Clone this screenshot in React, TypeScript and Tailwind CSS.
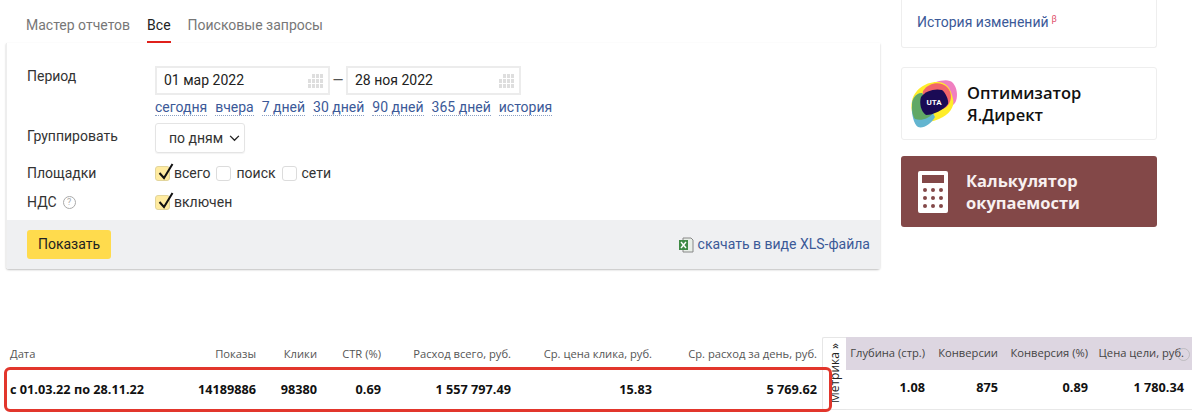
import React from "react";

function Cal() {
  const cells = [0, 1, 2, 3, 4, 5, 6, 7, 8, 9, 10, 11];
  return (
    <div className="grid grid-cols-4 gap-px w-[15px] h-[14px] opacity-60">
      {cells.map((c) => (
        <div key={c} className={c === 0 ? "bg-transparent" : "bg-[#c9c9c9]"} />
      ))}
    </div>
  );
}

function DateInput({ value }: { value: string }) {
  return (
    <div className="w-[175px] h-[29px] border-2 border-[#ececec] bg-white flex items-center justify-between pl-[7px] pr-[5px] text-[14px] text-[#222]">
      <span>{value}</span>
      <Cal />
    </div>
  );
}

function Check({ on }: { on: boolean }) {
  return (
    <span className={`relative block w-[15px] h-[15px] rounded-[3px] border ${on ? "bg-[#ffeba0] border-[#e2d59c]" : "bg-white border-[#dcdcdc]"}`}>
      {on && (
        <svg viewBox="0 0 18 20" className="absolute left-[1px] top-[-5px] w-[18px] h-[20px]">
          <path d="M2.5 11 L7 16 L15.5 2" fill="none" stroke="#111" strokeWidth="2" />
        </svg>
      )}
    </span>
  );
}

function Lnk({ children }: { children: React.ReactNode }) {
  return (
    <span className="text-[#3b5998] border-b border-dotted border-[#8ba0c4] leading-[15px] h-[16px]">{children}</span>
  );
}

function Row({ label, children, className }: { label: React.ReactNode; children: React.ReactNode; className: string }) {
  return (
    <div className={`flex ${className}`}>
      <div className="w-[155px] pl-[27px] shrink-0 text-[#333]">{label}</div>
      {children}
    </div>
  );
}

const cols = [
  ["w-[246px]", "Показы", "14189886"],
  ["w-[61px]", "Клики", "98380"],
  ["w-[64px]", "CTR (%)", "0.69"],
  ["w-[130px]", "Расход всего, руб.", "1 557 797.49"],
  ["w-[141px]", "Ср. цена клика, руб.", "15.83"],
  ["w-[165px]", "Ср. расход за день, руб.", "5 769.62"],
];
const cols2 = [
  ["w-[79px]", "Глубина (стр.)", "1.08"],
  ["w-[73px]", "Конверсии", "875"],
  ["w-[90px]", "Конверсия (%)", "0.89"],
  ["w-[96px]", "Цена цели, руб.", "1 780.34"],
];

export default function App() {
  return (
    <div className="relative w-[1200px] h-[413px] overflow-hidden bg-white text-[14px] font-['Roboto','Open_Sans',sans-serif]">
      <div className="flex h-[270px]">
        <div className="w-[880px] shrink-0">
          <div className="flex h-[43px] pl-[26px] gap-[17px] text-[14px] text-[#777] pt-[15px] leading-[20px]">
            <span>Мастер отчетов</span>
            <span className="relative text-[#222] h-[28px]">
              Все
              <span className="absolute left-0 right-0 bottom-0 h-[2px] bg-[#e0201b]" />
            </span>
            <span>Поисковые запросы</span>
          </div>
          <div className="ml-[6px] w-[874px] h-[226px] rounded-b-[3px] border-l border-[#eeeeee] shadow-[0_1px_2px_rgba(0,0,0,0.25)] flex flex-col">
            <div className="flex-1 -ml-[7px] pt-[23px]">
              <Row label="Период" className="h-[29px]">
                <div className="flex items-center">
                  <DateInput value="01 мар 2022" />
                  <span className="w-[16px] text-center text-[#555] mx-[0px]">—</span>
                  <DateInput value="28 ноя 2022" />
                </div>
              </Row>
              <div className="flex gap-[8px] pl-[155px] mt-[5px] h-[18px]">
                <Lnk>сегодня</Lnk>
                <Lnk>вчера</Lnk>
                <Lnk>7 дней</Lnk>
                <Lnk>30 дней</Lnk>
                <Lnk>90 дней</Lnk>
                <Lnk>365 дней</Lnk>
                <Lnk>история</Lnk>
              </div>
              <Row label={<span className="relative top-[3px]">Группировать</span>} className="h-[30px] mt-[5px]">
                <div className="relative w-[90px] h-[30px] border border-[#e4e4e4] rounded-[3px] pl-[13px] flex items-center gap-[6px] text-[#333] shadow-[0_1px_1px_rgba(0,0,0,0.05)]">
                  по дням
                  <svg viewBox="0 0 12 8" className="w-[11px] h-[7px]">
                    <path d="M1 1 L6 6 L11 1" fill="none" stroke="#222" strokeWidth="1.5" />
                  </svg>
                </div>
              </Row>
              <Row label="Площадки" className="h-[20px] mt-[10px] items-center">
                <div className="flex items-center text-[#333]">
                  <Check on />
                  <span className="ml-[4px]">всего</span>
                  <span className="ml-[6px]"><Check on={false} /></span>
                  <span className="ml-[5px]">поиск</span>
                  <span className="ml-[6px]"><Check on={false} /></span>
                  <span className="ml-[5px]">сети</span>
                </div>
              </Row>
              <Row
                label={
                  <span className="flex items-center gap-[6px]">
                    НДС
                    <span className="w-[13px] h-[13px] rounded-full border border-[#aaa] text-[#aaa] text-[9px] leading-[11px] text-center">?</span>
                  </span>
                }
                className="h-[20px] mt-[9px] items-center"
              >
                <div className="flex items-center text-[#333]">
                  <Check on />
                  <span className="ml-[4px]">включен</span>
                </div>
              </Row>
            </div>
            <div className="h-[49px] bg-[#eff0f2] flex items-center justify-between pl-[20px] pr-[10px]">
              <div className="w-[84px] h-[29px] bg-[#ffdb4d] rounded-[3px] flex items-center justify-center text-[#222]">Показать</div>
              <div className="flex items-center gap-[4px] text-[#3b5998]">
                <svg viewBox="0 0 16 16" className="w-[16px] h-[16px]">
                  <path d="M5 1h8l2 2v12H5z" fill="#e8eee8" stroke="#888" strokeWidth="1" />
                  <rect x="1" y="3" width="9" height="10" fill="#3f8a45" />
                  <path d="M3 5 L8 11 M8 5 L3 11" stroke="#fff" strokeWidth="1.4" />
                </svg>
                скачать в виде XLS-файла
              </div>
            </div>
          </div>
        </div>
        <div className="ml-[21px] w-[256px] shrink-0 flex flex-col">
          <div className="h-[48px] border border-t-0 border-[#eeeeee] rounded-b-[3px] pl-[15px] pt-[13px] leading-[18px] text-[#3b5998]">
            История изменений<sup className="text-[#e0506a] text-[9px] ml-[3px] -top-[5px]">β</sup>
          </div>
          <div className="mt-[19px] h-[73px] border border-[#eeeeee] rounded-[3px] flex items-center pl-[7px]">
            <svg viewBox="0 0 50 50" className="w-[50px] h-[50px] shrink-0">
              <path d="M27 3 C33 1 41 0 44 4 C48 9 49 16 47 22 C45 28 36 30 30 30 Z" fill="#f07fc0" />
              <path d="M3 22 C5 12 15 3 28 3 C38 3 42 10 44 20 C46 28 40 36 30 40 C22 44 8 44 4 36 C2 31 2 26 3 22 Z" fill="#ffed29" />
              <path d="M14 12 C20 3 32 2 38 8 C44 14 43 24 36 29 C28 33 16 30 12 24 Z" fill="#f2656a" />
              <path d="M3 26 C3 20 7 14 13 14 L26 38 C22 45 14 50 9 48 C5 46 2 34 3 26 Z" fill="#63b5d0" />
              <path d="M3 26 C3 20 7 14 13 14 L24 34 C20 40 12 42 6 40 C3 36 3 30 3 26 Z" fill="#61a865" />
              <path d="M12 18 C16 12 26 9 33 11 C37 14 40 22 39 25 C35 31 24 36 17 36 C12 33 10 24 12 18 Z" fill="#1a0b55" />
              <text x="25" y="26" textAnchor="middle" fill="#fff" fontSize="8" fontWeight="700">UTA</text>
            </svg>
            <div className="ml-[8px] font-['Open_Sans',sans-serif] text-[16.5px] leading-[22px] font-semibold text-[#111]">
              Оптимизатор
              <br />
              Я.Директ
            </div>
          </div>
          <div className="mt-[16px] h-[71px] bg-[#834848] rounded-[3px] flex items-center pl-[17px]">
            <svg viewBox="0 0 30 42" className="w-[30px] h-[42px] shrink-0">
              <path fillRule="evenodd" fill="#fff" d="M2 0h26a2 2 0 0 1 2 2v38a2 2 0 0 1-2 2H2a2 2 0 0 1-2-2V2a2 2 0 0 1 2-2z M4 4v8h22V4z" />
              {[19, 27, 35].map((y) =>
                [7, 15, 23].map((x) => <circle key={`${x}-${y}`} cx={x} cy={y} r="2" fill="#834848" />),
              )}
            </svg>
            <div className="ml-[18px] font-['Open_Sans',sans-serif] text-[16.5px] leading-[22px] font-bold text-[#f8f0f0]">
              Калькулятор
              <br />
              окупаемости
            </div>
          </div>
        </div>
      </div>

      <div className="mt-[67px] flex items-start text-[11.2px] font-['Open_Sans',sans-serif]">
        <div className="shrink-0 pt-[8px] w-[822px]">
          <div className="flex h-[32px] pt-[1px] text-[#555]">
            <div className="w-[10px]" />
            {cols.map((c, i) => (
              <div key={i} className={`${c[0]} text-right relative leading-[16px]`}>
                {i === 0 && <span className="absolute left-0">Дата</span>}
                {c[1]}
              </div>
            ))}
          </div>
          <div className="flex h-[32px] pt-[3px] font-bold text-[12.7px] text-[#111] leading-[18px]">
            <div className="w-[10px]" />
            {cols.map((c, i) => (
              <div key={i} className={`${c[0]} text-right relative`}>
                {i === 0 && <span className="absolute left-0">с 01.03.22 по 28.11.22</span>}
                {c[2]}
              </div>
            ))}
          </div>
        </div>
        <div className="w-[24px] h-[73px] shrink-0 border border-[#e6e6e6] border-r-0 rounded-l-[2px] flex items-start justify-center bg-white pt-[5px]">
          <span className="[writing-mode:vertical-rl] rotate-180 text-[12px] text-[#222] leading-[22px] whitespace-nowrap">Метрика »</span>
        </div>
        <div className="w-[346px] shrink-0">
          <div className="flex h-[33px] bg-[#ddd6e1] items-center text-[#444]">
            {cols2.map((c, i) => (
              <div key={i} className={`${c[0]} text-right whitespace-nowrap`}>{c[1]}</div>
            ))}
          </div>
          <div className="flex h-[40px] items-center font-bold text-[12.7px] text-[#111] border-b border-[#e8e8e8] pb-[3px]">
            {cols2.map((c, i) => (
              <div key={i} className={`${c[0]} text-right`}>{c[2]}</div>
            ))}
          </div>
        </div>
      </div>
      <span className="absolute left-[1177px] top-[348px] w-[13px] h-[13px] rounded-full border border-[#aaa] opacity-60" />
      <div className="absolute left-[4px] top-[367px] w-[828px] h-[45px] border-[3px] border-[#e2362c] rounded-[6px]" />
    </div>
  );
}
